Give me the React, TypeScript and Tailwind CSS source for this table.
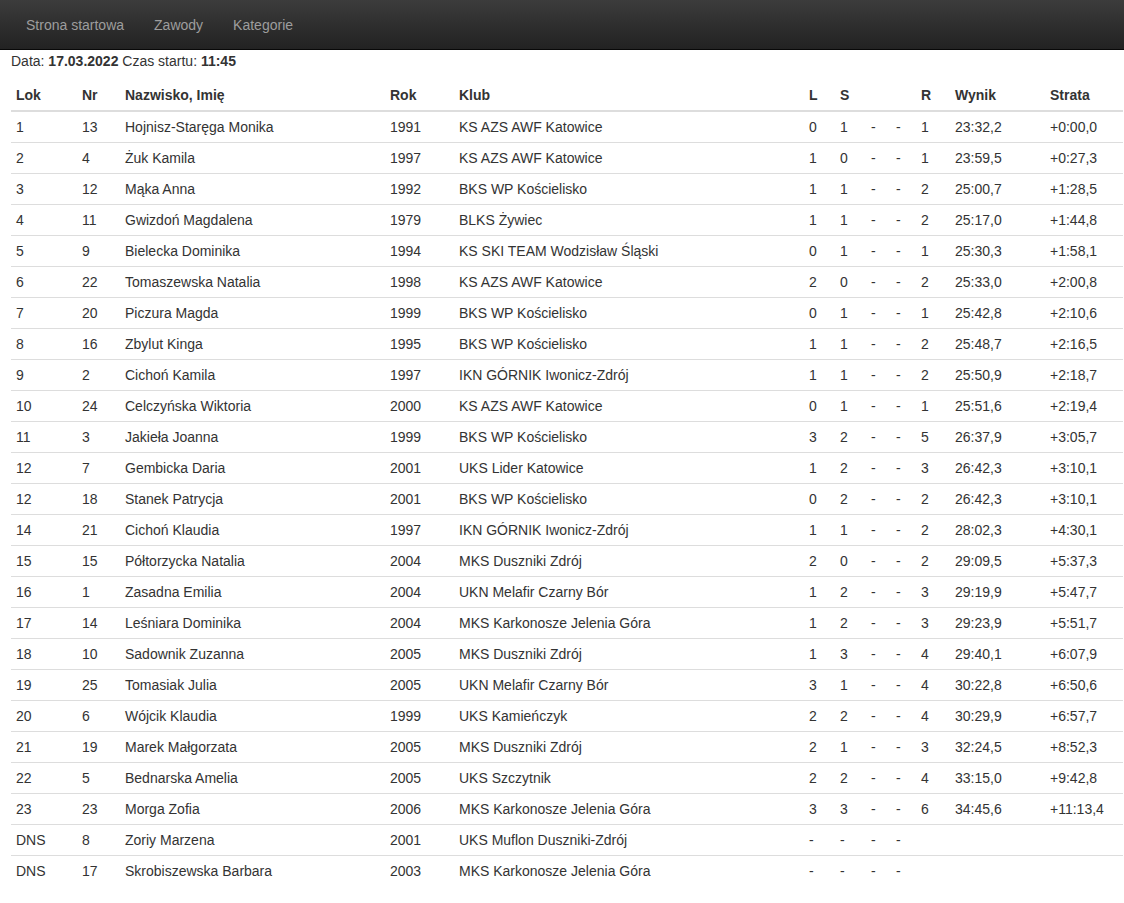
import React from "react";

type Row = {
  lok: string;
  nr: string;
  name: string;
  rok: string;
  klub: string;
  l: string;
  s: string;
  r: string;
  wynik: string;
  strata: string;
};

const rows: Row[] = [
  { lok: "1", nr: "13", name: "Hojnisz-Staręga Monika", rok: "1991", klub: "KS AZS AWF Katowice", l: "0", s: "1", r: "1", wynik: "23:32,2", strata: "+0:00,0" },
  { lok: "2", nr: "4", name: "Żuk Kamila", rok: "1997", klub: "KS AZS AWF Katowice", l: "1", s: "0", r: "1", wynik: "23:59,5", strata: "+0:27,3" },
  { lok: "3", nr: "12", name: "Mąka Anna", rok: "1992", klub: "BKS WP Kościelisko", l: "1", s: "1", r: "2", wynik: "25:00,7", strata: "+1:28,5" },
  { lok: "4", nr: "11", name: "Gwizdoń Magdalena", rok: "1979", klub: "BLKS Żywiec", l: "1", s: "1", r: "2", wynik: "25:17,0", strata: "+1:44,8" },
  { lok: "5", nr: "9", name: "Bielecka Dominika", rok: "1994", klub: "KS SKI TEAM Wodzisław Śląski", l: "0", s: "1", r: "1", wynik: "25:30,3", strata: "+1:58,1" },
  { lok: "6", nr: "22", name: "Tomaszewska Natalia", rok: "1998", klub: "KS AZS AWF Katowice", l: "2", s: "0", r: "2", wynik: "25:33,0", strata: "+2:00,8" },
  { lok: "7", nr: "20", name: "Piczura Magda", rok: "1999", klub: "BKS WP Kościelisko", l: "0", s: "1", r: "1", wynik: "25:42,8", strata: "+2:10,6" },
  { lok: "8", nr: "16", name: "Zbylut Kinga", rok: "1995", klub: "BKS WP Kościelisko", l: "1", s: "1", r: "2", wynik: "25:48,7", strata: "+2:16,5" },
  { lok: "9", nr: "2", name: "Cichoń Kamila", rok: "1997", klub: "IKN GÓRNIK Iwonicz-Zdrój", l: "1", s: "1", r: "2", wynik: "25:50,9", strata: "+2:18,7" },
  { lok: "10", nr: "24", name: "Celczyńska Wiktoria", rok: "2000", klub: "KS AZS AWF Katowice", l: "0", s: "1", r: "1", wynik: "25:51,6", strata: "+2:19,4" },
  { lok: "11", nr: "3", name: "Jakieła Joanna", rok: "1999", klub: "BKS WP Kościelisko", l: "3", s: "2", r: "5", wynik: "26:37,9", strata: "+3:05,7" },
  { lok: "12", nr: "7", name: "Gembicka Daria", rok: "2001", klub: "UKS Lider Katowice", l: "1", s: "2", r: "3", wynik: "26:42,3", strata: "+3:10,1" },
  { lok: "12", nr: "18", name: "Stanek Patrycja", rok: "2001", klub: "BKS WP Kościelisko", l: "0", s: "2", r: "2", wynik: "26:42,3", strata: "+3:10,1" },
  { lok: "14", nr: "21", name: "Cichoń Klaudia", rok: "1997", klub: "IKN GÓRNIK Iwonicz-Zdrój", l: "1", s: "1", r: "2", wynik: "28:02,3", strata: "+4:30,1" },
  { lok: "15", nr: "15", name: "Półtorzycka Natalia", rok: "2004", klub: "MKS Duszniki Zdrój", l: "2", s: "0", r: "2", wynik: "29:09,5", strata: "+5:37,3" },
  { lok: "16", nr: "1", name: "Zasadna Emilia", rok: "2004", klub: "UKN Melafir Czarny Bór", l: "1", s: "2", r: "3", wynik: "29:19,9", strata: "+5:47,7" },
  { lok: "17", nr: "14", name: "Leśniara Dominika", rok: "2004", klub: "MKS Karkonosze Jelenia Góra", l: "1", s: "2", r: "3", wynik: "29:23,9", strata: "+5:51,7" },
  { lok: "18", nr: "10", name: "Sadownik Zuzanna", rok: "2005", klub: "MKS Duszniki Zdrój", l: "1", s: "3", r: "4", wynik: "29:40,1", strata: "+6:07,9" },
  { lok: "19", nr: "25", name: "Tomasiak Julia", rok: "2005", klub: "UKN Melafir Czarny Bór", l: "3", s: "1", r: "4", wynik: "30:22,8", strata: "+6:50,6" },
  { lok: "20", nr: "6", name: "Wójcik Klaudia", rok: "1999", klub: "UKS Kamieńczyk", l: "2", s: "2", r: "4", wynik: "30:29,9", strata: "+6:57,7" },
  { lok: "21", nr: "19", name: "Marek Małgorzata", rok: "2005", klub: "MKS Duszniki Zdrój", l: "2", s: "1", r: "3", wynik: "32:24,5", strata: "+8:52,3" },
  { lok: "22", nr: "5", name: "Bednarska Amelia", rok: "2005", klub: "UKS Szczytnik", l: "2", s: "2", r: "4", wynik: "33:15,0", strata: "+9:42,8" },
  { lok: "23", nr: "23", name: "Morga Zofia", rok: "2006", klub: "MKS Karkonosze Jelenia Góra", l: "3", s: "3", r: "6", wynik: "34:45,6", strata: "+11:13,4" },
];

const dns: Row[] = [
  { lok: "DNS", nr: "8", name: "Zoriy Marzena", rok: "2001", klub: "UKS Muflon Duszniki-Zdrój", l: "-", s: "-", r: "", wynik: "", strata: "" },
  { lok: "DNS", nr: "17", name: "Skrobiszewska Barbara", rok: "2003", klub: "MKS Karkonosze Jelenia Góra", l: "-", s: "-", r: "", wynik: "", strata: "" },
];

const td = "px-[5px] py-[5px] leading-5 align-top border-t border-[#ddd] whitespace-nowrap";
const th = "px-[5px] py-[5px] leading-5 text-left font-bold align-bottom border-b-2 border-[#ddd] whitespace-nowrap";

export default function App() {
  return (
    <div className="min-h-[903px] bg-white text-[14px] text-[#333] font-['Liberation_Sans',Arial,sans-serif]">
      {/* navbar */}
      <nav className="h-[50px] border-b border-[#080808] bg-gradient-to-b from-[#3c3c3c] to-[#222] pl-[11px]">
        <ul className="flex">
          {["Strona startowa", "Zawody", "Kategorie"].map((t) => (
            <li key={t}>
              <a className="block px-[15px] py-[15px] leading-5 text-[#9d9d9d] cursor-pointer">{t}</a>
            </li>
          ))}
        </ul>
      </nav>

      <div className="pl-[11px] pr-[1px]">
        <p className="mt-px leading-5">
          Data: <b>17.03.2022</b> Czas startu: <b>11:45</b>
        </p>

        <table className="mt-[9px] w-full table-fixed border-collapse">
          <colgroup>
            <col className="w-[66px]" />
            <col className="w-[43px]" />
            <col className="w-[265px]" />
            <col className="w-[69px]" />
            <col className="w-[350px]" />
            <col className="w-[31px]" />
            <col className="w-[31px]" />
            <col className="w-[25px]" />
            <col className="w-[25px]" />
            <col className="w-[34px]" />
            <col className="w-[95px]" />
            <col />
          </colgroup>
          <thead>
            <tr>
              <th className={th}>Lok</th>
              <th className={th}>Nr</th>
              <th className={th}>Nazwisko, Imię</th>
              <th className={th}>Rok</th>
              <th className={th}>Klub</th>
              <th className={th}>L</th>
              <th className={th}>S</th>
              <th className={th}></th>
              <th className={th}></th>
              <th className={th}>R</th>
              <th className={th}>Wynik</th>
              <th className={th}>Strata</th>
            </tr>
          </thead>
          <tbody>
            {[...rows, ...dns].map((r, i) => (
              <tr key={i}>
                <td className={td}>{r.lok}</td>
                <td className={td}>{r.nr}</td>
                <td className={td}>{r.name}</td>
                <td className={td}>{r.rok}</td>
                <td className={td}>{r.klub}</td>
                <td className={td}>{r.l}</td>
                <td className={td}>{r.s}</td>
                <td className={td}>-</td>
                <td className={td}>-</td>
                <td className={td}>{r.r}</td>
                <td className={td}>{r.wynik}</td>
                <td className={td}>{r.strata}</td>
              </tr>
            ))}
          </tbody>
        </table>
      </div>
    </div>
  );
}
